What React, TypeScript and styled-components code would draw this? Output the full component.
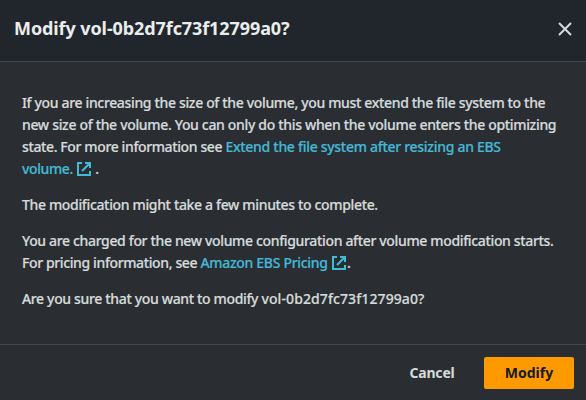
import React from 'react';
import styled, { createGlobalStyle } from 'styled-components';

const GlobalStyle = createGlobalStyle`
  *, *::before, *::after { box-sizing: border-box; }
  body { margin: 0; background: #2a2e33; }
`;

const Dialog = styled.div`
  display: flex;
  flex-direction: column;
  width: 586px;
  height: 400px;
  background: #2a2e33;
  color: #d5dbdb;
  font-family: 'Noto Sans', 'Open Sans', sans-serif;
  font-size: 14px;
  font-weight: 500;
  line-height: 22px;
`;

const Header = styled.header`
  display: flex;
  justify-content: space-between;
  align-items: center;
  height: 62px;
  padding: 0 14px 4px 14px;
  background: #21252c;
  border-bottom: 1px solid #414750;
`;

const Title = styled.h2`
  margin: 0 0 2px;
  color: #eaeded;
  font-size: 18px;
  font-weight: 700;
  letter-spacing: -0.09px;
  white-space: nowrap;
`;

const IconButton = styled.button`
  display: flex;
  padding: 0;
  border: 0;
  background: none;
  color: #d5dbdb;
`;

const Content = styled.main`
  display: flex;
  flex-direction: column;
  gap: 14px;
  height: 282px;
  padding: 30px 22px 0;
  -webkit-text-stroke: 0.2px currentColor;
`;

const Paragraph = styled.p`
  margin: 0;
`;

const Line = styled.span<{ $track?: number }>`
  display: block;
  height: 22px;
  white-space: nowrap;
  letter-spacing: ${({ $track = -0.345 }) => $track}px;
`;

const Link = styled.a<{ $track?: number }>`
  color: #44b9d6;
  letter-spacing: ${({ $track = -0.29 }) => $track}px;
`;

const VolumeId = styled.span`
  letter-spacing: 0.1px;
`;

const ExternalIcon = styled.svg`
  width: 14px;
  height: 14px;
  margin: 0 1px;
  vertical-align: -2px;
`;

const Footer = styled.footer`
  display: flex;
  justify-content: flex-end;
  height: 56px;
  padding: 12px 12px 0;
  border-top: 1px solid #414750;
`;

const Button = styled.button<{ $primary?: boolean }>`
  width: ${({ $primary }) => ($primary ? 90 : 84)}px;
  height: 32px;
  margin-left: 10px;
  padding: 0;
  border: 0;
  border-radius: 2px;
  background: ${({ $primary }) => ($primary ? '#ff9900' : 'transparent')};
  color: ${({ $primary }) => ($primary ? '#16191f' : '#d5dbdb')};
  font: inherit;
  font-weight: 700;
  letter-spacing: ${({ $primary }) => ($primary ? 0 : -0.2)}px;
`;

const External = () => (
  <ExternalIcon viewBox="0 0 14 14" fill="none" stroke="#44b9d6" strokeWidth="2">
    <path d="M5 1H1v12h12V9M8 1h5v5M5 9l7.5-7.5" />
  </ExternalIcon>
);

export default function App() {
  return (
    <>
      <GlobalStyle />
      <Dialog role="dialog">
        <Header>
          <Title>Modify vol-0b2d7fc73f12799a0?</Title>
          <IconButton aria-label="Close">
            <svg width="14" height="14" viewBox="0 0 14 14" stroke="currentColor" strokeWidth="2">
              <path d="M1 1l12 12M13 1L1 13" />
            </svg>
          </IconButton>
        </Header>
        <Content>
          <Paragraph>
            <Line>If you are increasing the size of the volume, you must extend the file system to the</Line>
            <Line $track={-0.33}>new size of the volume. You can only do this when the volume enters the optimizing</Line>
            <Line $track={-0.38}>state. For more information see <Link>Extend the file system after resizing an EBS</Link></Line>
            <Line><Link $track={-0.4}>volume. <External /></Link> .</Line>
          </Paragraph>
          <Paragraph>
            <Line>The modification might take a few minutes to complete.</Line>
          </Paragraph>
          <Paragraph>
            <Line>You are charged for the new volume configuration after volume modification starts.</Line>
            <Line $track={-0.38}>For pricing information, see <Link $track={-0.3}>Amazon EBS Pricing <External /></Link>.</Line>
          </Paragraph>
          <Paragraph>
            <Line>Are you sure that you want to modify <VolumeId>vol-0b2d7fc73f12799a0?</VolumeId></Line>
          </Paragraph>
        </Content>
        <Footer>
          <Button>Cancel</Button>
          <Button $primary>Modify</Button>
        </Footer>
      </Dialog>
    </>
  );
}
